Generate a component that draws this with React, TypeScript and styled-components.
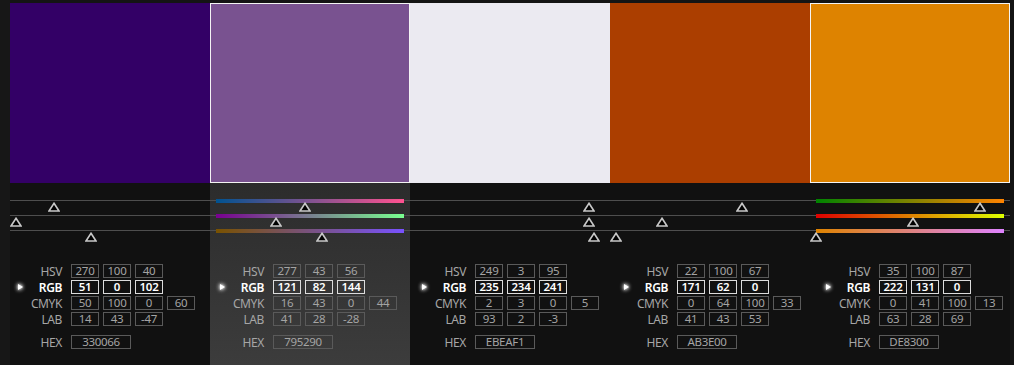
import React from "react";
import styled, { createGlobalStyle } from "styled-components";

const GlobalStyle = createGlobalStyle`
	html, body {
		margin: 0;
		padding: 0;
		background: #141414;
	}
	body {
		font-family: "Noto Sans", "Open Sans", sans-serif;
	}
`;

type Swatch = {
	hex: string;
	rgb: [number, number, number];
	hsv: number[];
	cmyk: number[];
	lab: number[];
	selected?: boolean;
	hover?: boolean;
};

const swatches: Swatch[] = [
	{ hex: "330066", rgb: [51, 0, 102], hsv: [270, 100, 40], cmyk: [50, 100, 0, 60], lab: [14, 43, -47] },
	{ hex: "795290", rgb: [121, 82, 144], hsv: [277, 43, 56], cmyk: [16, 43, 0, 44], lab: [41, 28, -28], selected: true, hover: true },
	{ hex: "EBEAF1", rgb: [235, 234, 241], hsv: [249, 3, 95], cmyk: [2, 3, 0, 5], lab: [93, 2, -3] },
	{ hex: "AB3E00", rgb: [171, 62, 0], hsv: [22, 100, 67], cmyk: [0, 64, 100, 33], lab: [41, 43, 53] },
	{ hex: "DE8300", rgb: [222, 131, 0], hsv: [35, 100, 87], cmyk: [0, 41, 100, 13], lab: [63, 28, 69], selected: true },
];

const Page = styled.div`
	display: flex;
	height: 365px;
	box-sizing: border-box;
	padding: 3px 4px 0 0;
	border-left: 10px solid #171717;
	background: #141414;
`;

const Column = styled.div<{ $hover?: boolean }>`
	width: 200px;
	display: flex;
	flex-direction: column;
	background: ${(p) => (p.$hover ? "linear-gradient(#1c1c1c, #3c3c3c)" : "#111111")};
`;

const Color = styled.div<{ $selected?: boolean }>`
	height: 180px;
	box-sizing: border-box;
	border: ${(p) => (p.$selected ? "1px solid #f4f4f4" : "none")};
`;

const Sliders = styled.div`
	padding-top: 16px;
`;

const SliderRow = styled.div`
	position: relative;
	height: 15px;
`;

const Track = styled.div`
	position: absolute;
	left: 0;
	right: 0;
	top: 1px;
	height: 1px;
	background: #4e4e4e;
`;

const Bar = styled.div`
	position: absolute;
	left: 6px;
	width: 188px;
	top: 0;
	height: 4px;
`;

const Thumb = styled.svg`
	position: absolute;
	top: 3px;
	width: 12px;
	height: 10px;
	margin-left: -6px;
`;

const Info = styled.div<{ $shift: number }>`
	padding: 20px 0 0 ${(p) => 9 + p.$shift}px;
	display: flex;
	flex-direction: column;
	gap: 2px;
`;

const Row = styled.div<{ $gapTop?: boolean }>`
	display: flex;
	align-items: center;
	height: 14px;
	margin-top: ${(p) => (p.$gapTop ? "7px" : "0")};
`;

const Label = styled.div<{ $active?: boolean }>`
	width: 43px;
	margin-right: 9px;
	display: flex;
	align-items: center;
	justify-content: space-between;
	font-size: 12px;
	color: ${(p) => (p.$active ? "#ffffff" : "#a6a6a6")};
	font-weight: ${(p) => (p.$active ? 600 : 400)};
	letter-spacing: -0.4px;
`;

const Pointer = styled.span`
	width: 0;
	height: 0;
	margin-left: -1px;
	border-top: 3.5px solid transparent;
	border-bottom: 3.5px solid transparent;
	border-left: 5px solid #ffffff;
	filter: drop-shadow(0 0 2px #ffffff) drop-shadow(0 0 1px rgba(255, 255, 255, 0.8));
`;

const Boxes = styled.div`
	display: flex;
	gap: 4px;
`;

const Box = styled.div<{ $active?: boolean; $wide?: boolean }>`
	width: ${(p) => (p.$wide ? "60px" : "28px")};
	height: 14px;
	box-sizing: border-box;
	border: 1px solid ${(p) => (p.$active ? "#dcdcdc" : "#5a5a5a")};
	color: ${(p) => (p.$active ? "#ffffff" : "#a4a4a4")};
	font-weight: ${(p) => (p.$active ? 600 : 400)};
	font-size: 11.5px;
	line-height: 12px;
	text-align: center;
	letter-spacing: -0.3px;
`;

const channelGradient = (rgb: number[], ch: number) => {
	const a = [...rgb];
	const b = [...rgb];
	a[ch] = 0;
	b[ch] = 255;
	return `linear-gradient(to right, rgb(${a.join(",")}), rgb(${b.join(",")}))`;
};

const Slider = ({ rgb, ch, showBar }: { rgb: number[]; ch: number; showBar?: boolean }) => (
	<SliderRow>
		<Track />
		{showBar && <Bar style={{ background: channelGradient(rgb, ch) }} />}
		<Thumb viewBox="0 0 12 10" style={{ left: 6 + (rgb[ch] / 255) * 188 }}>
			<polygon points="6,1.3 11,9 1,9" fill="#000" stroke="#c8c8c8" strokeWidth="1.6" strokeLinejoin="miter" />
		</Thumb>
	</SliderRow>
);

const ValueRow = ({ label, values, active, pointer }: { label: string; values: number[]; active?: boolean; pointer?: boolean }) => (
	<Row>
		<Label $active={active}>
			{pointer ? <Pointer /> : <span />}
			<span>{label}</span>
		</Label>
		<Boxes>
			{values.map((v, i) => (
				<Box key={i} $active={active}>{v}</Box>
			))}
		</Boxes>
	</Row>
);

export default function App() {
	return (
		<>
			<GlobalStyle />
			<Page>
				{swatches.map((s, i) => (
					<Column key={s.hex} $hover={s.hover}>
						<Color $selected={s.selected} style={{ background: `#${s.hex}` }} />
						<Sliders>
							{[0, 1, 2].map((ch) => (
								<Slider key={ch} rgb={s.rgb} ch={ch} showBar={s.selected} />
							))}
						</Sliders>
						<Info $shift={i * 2}>
							<ValueRow label="HSV" values={s.hsv} />
							<ValueRow label="RGB" values={s.rgb} active pointer />
							<ValueRow label="CMYK" values={s.cmyk} />
							<ValueRow label="LAB" values={s.lab} />
							<Row $gapTop>
								<Label>
									<span />
									<span>HEX</span>
								</Label>
								<Box $wide>{s.hex}</Box>
							</Row>
						</Info>
					</Column>
				))}
			</Page>
		</>
	);
}
